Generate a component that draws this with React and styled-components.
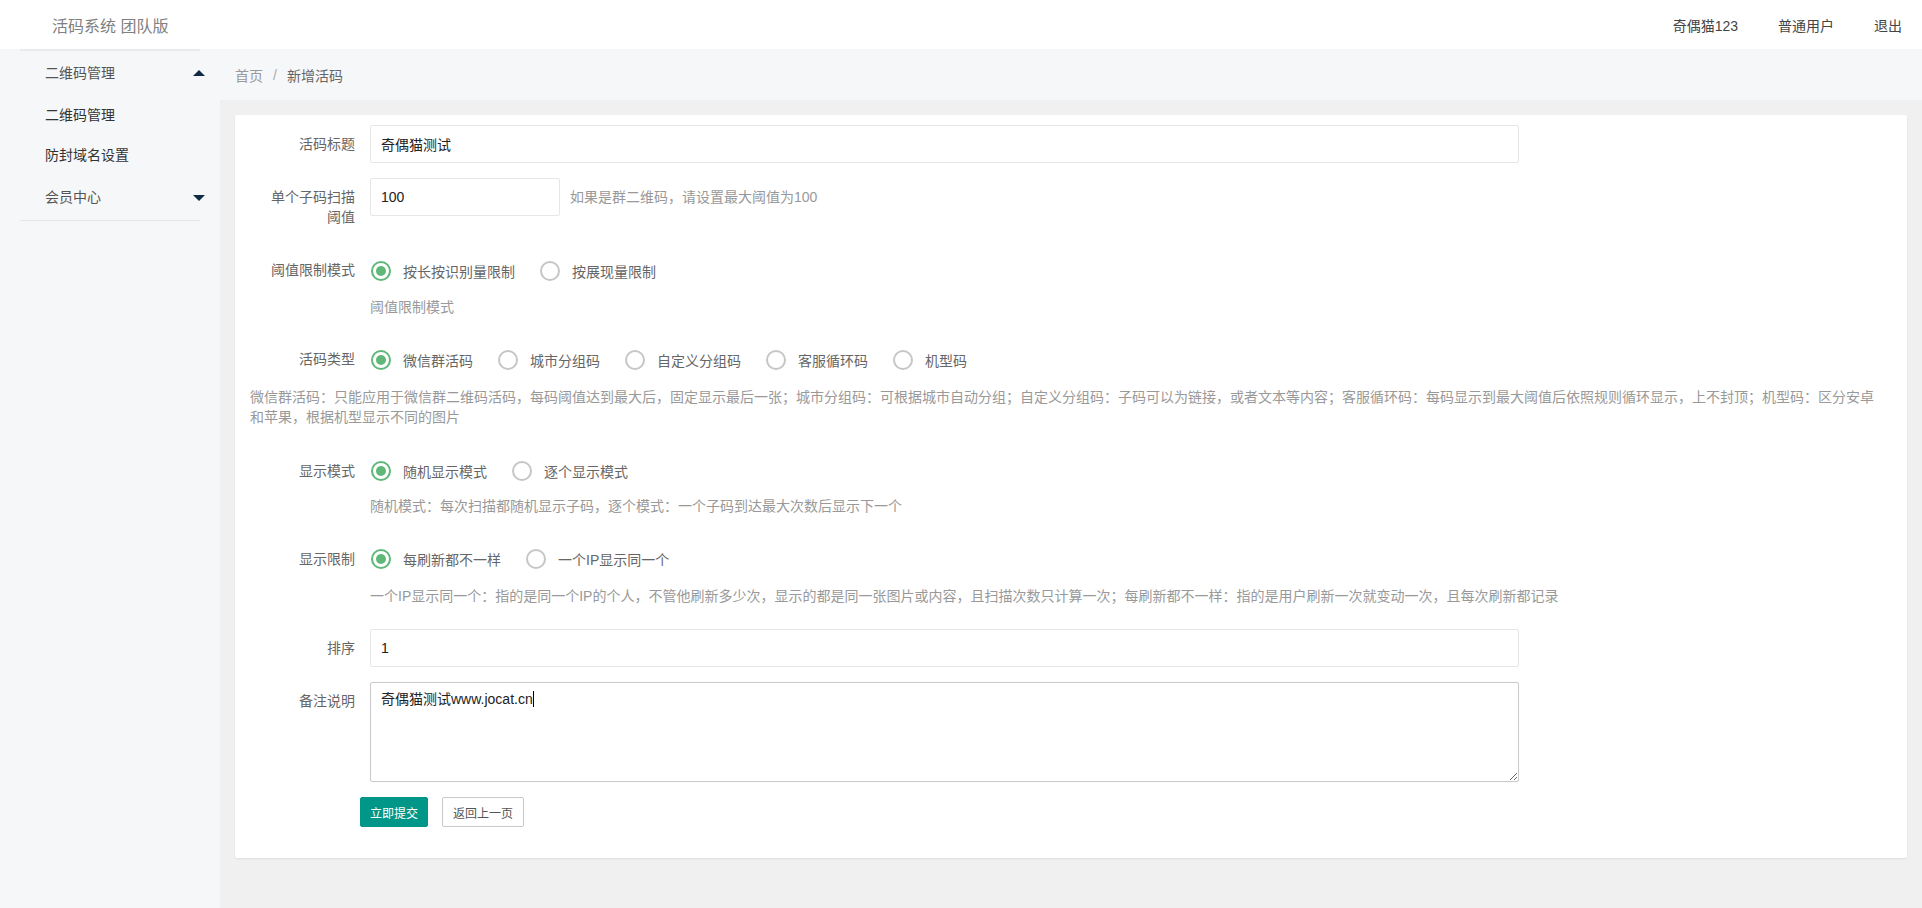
import React from 'react'
import styled, { createGlobalStyle } from 'styled-components'

const GlobalStyle = createGlobalStyle`
  html, body {
    margin: 0;
    height: 100%;
    background: #f0f0f0;
    font-family: "Liberation Sans", "Noto Sans CJK SC", Arial, sans-serif;
    font-size: 14px;
    color: #666;
  }
`

const Page = styled.div`
  height: 908px;
  display: flex;
  flex-direction: column;
  overflow: hidden;
`

const Header = styled.header`
  height: 49px;
  flex: none;
  background: #fff;
  display: flex;
  align-items: center;
  justify-content: space-between;
  padding: 0 20px 0 52px;
`

const Logo = styled.div`
  font-size: 16px;
  color: #808080;
`

const UserMenu = styled.div`
  display: flex;
  gap: 40px;
  color: #444;
`

const Body = styled.div`
  flex: 1;
  display: flex;
  min-height: 0;
`

const Sidebar = styled.aside`
  width: 220px;
  flex: none;
  background: #f6f7f9;
`

const Nav = styled.nav`
  margin: 0 20px;
  border-top: 2px solid #e8eaed;
  border-bottom: 1px solid #e2e4e7;
`

const NavHeader = styled.div`
  height: ${p => p.$height}px;
  margin-bottom: 2px;
  display: flex;
  align-items: center;
  justify-content: space-between;
  margin-right: -5px;
  padding-left: 25px;
  color: #555;
`

const Arrow = styled.span`
  width: 0;
  height: 0;
  margin-top: 3px;
  border-left: 6px solid transparent;
  border-right: 6px solid transparent;
  border-bottom: ${p => (p.$up ? '6px solid #0f2a45' : '0')};
  border-top: ${p => (p.$up ? '0' : '6px solid #0f2a45')};
`

const NavItem = styled.div`
  height: 40px;
  display: flex;
  align-items: center;
  padding-left: 25px;
  color: #333;
`

const Main = styled.main`
  flex: 1;
  min-width: 0;
  display: flex;
  flex-direction: column;
`

const Breadcrumb = styled.div`
  height: 51px;
  flex: none;
  background: #f6f7f9;
  display: flex;
  align-items: center;
  padding-left: 15px;
`

const Crumb = styled.span`
  color: ${p => (p.$current ? '#666' : '#999')};
`

const CrumbSep = styled.span`
  color: #aaa;
  margin: 0 10px;
`

const Content = styled.div`
  flex: 1;
  padding: 15px;
  background: #f0f0f0;
`

const Card = styled.div`
  background: #fff;
  border-radius: 2px;
  box-shadow: 0 1px 2px rgba(0, 0, 0, 0.08);
  padding: 10px 0 31px;
`

const Row = styled.div`
  display: flex;
  align-items: flex-start;
  margin-bottom: 15px;
`

const Label = styled.label`
  width: 135px;
  flex: none;
  box-sizing: border-box;
  padding: 9px 15px 9px 35px;
  line-height: 20px;
  text-align: right;
  color: #666;
`

const Field = styled.div`
  flex: 1;
  min-width: 0;
`

const TextInput = styled.input`
  display: block;
  box-sizing: border-box;
  width: ${p => p.$width}px;
  height: 38px;
  padding: 0 10px;
  border: 1px solid #e6e6e6;
  border-radius: 2px;
  background: #fff;
  font: inherit;
  color: #222;
  outline: none;
`

const NoteBox = styled.div`
  box-sizing: border-box;
  width: 1149px;
  height: 100px;
  padding: 6px 10px;
  border: 1px solid #c9c9c9;
  border-radius: 2px;
  line-height: 20px;
  color: #222;
  overflow: auto;
  resize: vertical;
`

const Caret = styled.span`
  display: inline-block;
  width: 1px;
  height: 16px;
  background: #000;
  vertical-align: -3px;
`

const InlineHint = styled.span`
  margin-left: 10px;
  line-height: 38px;
  color: #999;
`

const InlineFields = styled.div`
  display: flex;
`

const RadioGroup = styled.div`
  display: flex;
  height: 38px;
  align-items: center;
  padding: ${p => (p.$flush ? 0 : 2)}px 0 0 1px;
  box-sizing: border-box;
  gap: 25px;
`

const RadioItem = styled.div`
  display: flex;
  align-items: center;
  gap: 12px;
  color: #666;
`

const RadioMark = styled.span`
  width: 20px;
  height: 20px;
  box-sizing: border-box;
  border-radius: 50%;
  border: 2px solid ${p => (p.$checked ? '#5fb878' : '#c6c6c6')};
  display: flex;
  align-items: center;
  justify-content: center;
  &::after {
    content: '';
    display: ${p => (p.$checked ? 'block' : 'none')};
    width: 10px;
    height: 10px;
    border-radius: 50%;
    background: #5fb878;
  }
`

const Hint = styled.div`
  line-height: 20px;
  padding: ${p => p.$top ?? 8}px 0 ${p => p.$bottom ?? 8}px;
  color: #999;
`

const Description = styled.div`
  padding: 9px 30px 9px 15px;
  line-height: 20px;
  color: #999;
  margin-top: -15px;
  margin-bottom: 16px;
`

const Actions = styled.div`
  display: flex;
  gap: 14px;
  padding-left: 125px;
`

const Button = styled.button`
  box-sizing: border-box;
  height: 30px;
  width: ${p => p.$width}px;
  padding: 0;
  border: 1px solid ${p => (p.$primary ? '#009688' : '#c9c9c9')};
  border-radius: 2px;
  background: ${p => (p.$primary ? '#009688' : '#fff')};
  color: ${p => (p.$primary ? '#fff' : '#555')};
  font: inherit;
  font-size: 12px;
`

const Radios = ({ options, flush }) => (
  <RadioGroup $flush={flush}>
    {options.map((o, i) => (
      <RadioItem key={o}>
        <RadioMark $checked={i === 0} />
        {o}
      </RadioItem>
    ))}
  </RadioGroup>
)

export default function App() {
  return (
    <Page>
      <GlobalStyle />
      <Header>
        <Logo>活码系统 团队版</Logo>
        <UserMenu>
          <span>奇偶猫123</span>
          <span>普通用户</span>
          <span>退出</span>
        </UserMenu>
      </Header>
      <Body>
        <Sidebar>
          <Nav>
            <NavHeader $height={41}>二维码管理<Arrow $up /></NavHeader>
            <NavItem>二维码管理</NavItem>
            <NavItem>防封域名设置</NavItem>
            <NavHeader $height={44}>会员中心<Arrow /></NavHeader>
          </Nav>
        </Sidebar>
        <Main>
          <Breadcrumb>
            <Crumb>首页</Crumb>
            <CrumbSep>/</CrumbSep>
            <Crumb $current>新增活码</Crumb>
          </Breadcrumb>
          <Content>
            <Card>
              <Row>
                <Label>活码标题</Label>
                <Field><TextInput $width={1149} defaultValue="奇偶猫测试" /></Field>
              </Row>
              <Row>
                <Label>单个子码扫描阈值</Label>
                <Field>
                  <InlineFields>
                    <TextInput $width={190} defaultValue="100" />
                    <InlineHint>如果是群二维码，请设置最大阈值为100</InlineHint>
                  </InlineFields>
                </Field>
              </Row>
              <Row>
                <Label>阈值限制模式</Label>
                <Field>
                  <Radios options={['按长按识别量限制', '按展现量限制']} />
                  <Hint>阈值限制模式</Hint>
                </Field>
              </Row>
              <Row>
                <Label>活码类型</Label>
                <Field>
                  <Radios options={['微信群活码', '城市分组码', '自定义分组码', '客服循环码', '机型码']} />
                </Field>
              </Row>
              <Description>
                微信群活码：只能应用于微信群二维码活码，每码阈值达到最大后，固定显示最后一张；城市分组码：可根据城市自动分组；自定义分组码：子码可以为链接，或者文本等内容；客服循环码：每码显示到最大阈值后依照规则循环显示，上不封顶；机型码：区分安卓和苹果，根据机型显示不同的图片
              </Description>
              <Row>
                <Label>显示模式</Label>
                <Field>
                  <Radios flush options={['随机显示模式', '逐个显示模式']} />
                  <Hint $top={6} $bottom={9}>随机模式：每次扫描都随机显示子码，逐个模式：一个子码到达最大次数后显示下一个</Hint>
                </Field>
              </Row>
              <Row>
                <Label>显示限制</Label>
                <Field>
                  <Radios flush options={['每刷新都不一样', '一个IP显示同一个']} />
                  <Hint>一个IP显示同一个：指的是同一个IP的个人，不管他刷新多少次，显示的都是同一张图片或内容，且扫描次数只计算一次；每刷新都不一样：指的是用户刷新一次就变动一次，且每次刷新都记录</Hint>
                </Field>
              </Row>
              <Row>
                <Label>排序</Label>
                <Field><TextInput $width={1149} defaultValue="1" /></Field>
              </Row>
              <Row>
                <Label>备注说明</Label>
                <Field>
                  <NoteBox>奇偶猫测试www.jocat.cn<Caret /></NoteBox>
                </Field>
              </Row>
              <Actions>
                <Button $primary $width={68}>立即提交</Button>
                <Button $width={82}>返回上一页</Button>
              </Actions>
            </Card>
          </Content>
        </Main>
      </Body>
    </Page>
  )
}
